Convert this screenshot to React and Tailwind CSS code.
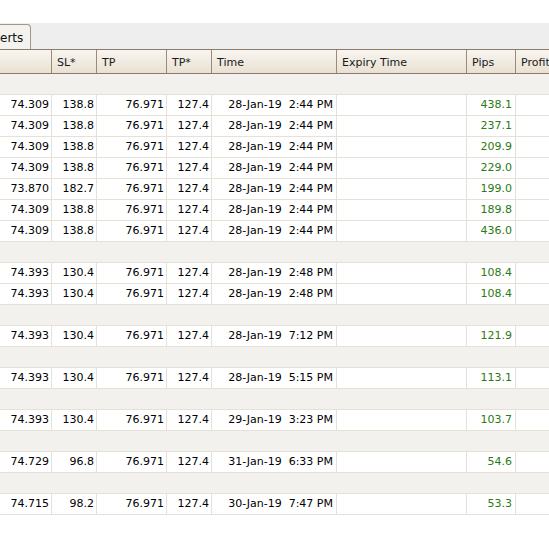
import React from 'react';

const groups = [
  [
    ['74.309', '138.8', '28-Jan-19  2:44 PM', '438.1'],
    ['74.309', '138.8', '28-Jan-19  2:44 PM', '237.1'],
    ['74.309', '138.8', '28-Jan-19  2:44 PM', '209.9'],
    ['74.309', '138.8', '28-Jan-19  2:44 PM', '229.0'],
    ['73.870', '182.7', '28-Jan-19  2:44 PM', '199.0'],
    ['74.309', '138.8', '28-Jan-19  2:44 PM', '189.8'],
    ['74.309', '138.8', '28-Jan-19  2:44 PM', '436.0'],
  ],
  [
    ['74.393', '130.4', '28-Jan-19  2:48 PM', '108.4'],
    ['74.393', '130.4', '28-Jan-19  2:48 PM', '108.4'],
  ],
  [['74.393', '130.4', '28-Jan-19  7:12 PM', '121.9']],
  [['74.393', '130.4', '28-Jan-19  5:15 PM', '113.1']],
  [['74.393', '130.4', '29-Jan-19  3:23 PM', '103.7']],
  [['74.729', '96.8', '31-Jan-19  6:33 PM', '54.6']],
  [['74.715', '98.2', '30-Jan-19  7:47 PM', '53.3']],
];

const headers = ['', 'SL*', 'TP', 'TP*', 'Time', 'Expiry Time', 'Pips', 'Profit'];
const cols = 'grid grid-cols-[52px_45px_70px_45px_125px_130px_49px_100px]';

const Cell = ({ children, className = '' }) => (
  <div className={`h-[21px] border-r border-b border-[#e6e1d6] pr-[2px] flex items-center justify-end whitespace-pre ${className}`}>
    {children}
  </div>
);

const App = () => {
  return (
    <div
      className="w-[549px] h-[551px] overflow-hidden bg-white text-[11px] text-black"
      style={{ fontFamily: '"DejaVu Sans", Verdana, sans-serif' }}
    >
      <div className="h-[23px] bg-white" />
      <div className="h-[26px] bg-[#eeeeee] flex items-end">
        <div className="h-[25px] w-[31px] pt-[2px] bg-[#f4f2ee] border-t border-r border-[#a39888] rounded-tr-[4px] flex items-center text-[12px] text-[#111]">
          erts
        </div>
      </div>

      <div className={`${cols} border-t border-b border-[#8c7b6b] bg-gradient-to-b from-[#f8f5f0] to-[#e9e1d3] w-[616px]`}>
        {headers.map((h, i) => (
          <div
            key={i}
            className={`h-[23px] pl-[5px] pt-[4px] flex items-center whitespace-nowrap text-[#1a1a1a] ${i < 7 ? 'border-r border-[#9a8a7a]' : ''}`}
          >
            {h}
          </div>
        ))}
      </div>

      {groups.map((rows, gi) => (
        <div key={gi}>
          <div className="h-[21px] bg-[#f3f1ed] border-b border-[#e6e1d6]" />
          {rows.map((r, ri) => (
            <div key={ri} className={`${cols} w-[616px]`}>
              <Cell>{r[0]}</Cell>
              <Cell>{r[1]}</Cell>
              <Cell>76.971</Cell>
              <Cell>127.4</Cell>
              <Cell className="pr-[3px]">{r[2]}</Cell>
              <Cell />
              <Cell className="pr-[3px] text-[#2b7a12]">{r[3]}</Cell>
              <Cell className="border-r-0" />
            </div>
          ))}
        </div>
      ))}
    </div>
  );
};

export default App;
